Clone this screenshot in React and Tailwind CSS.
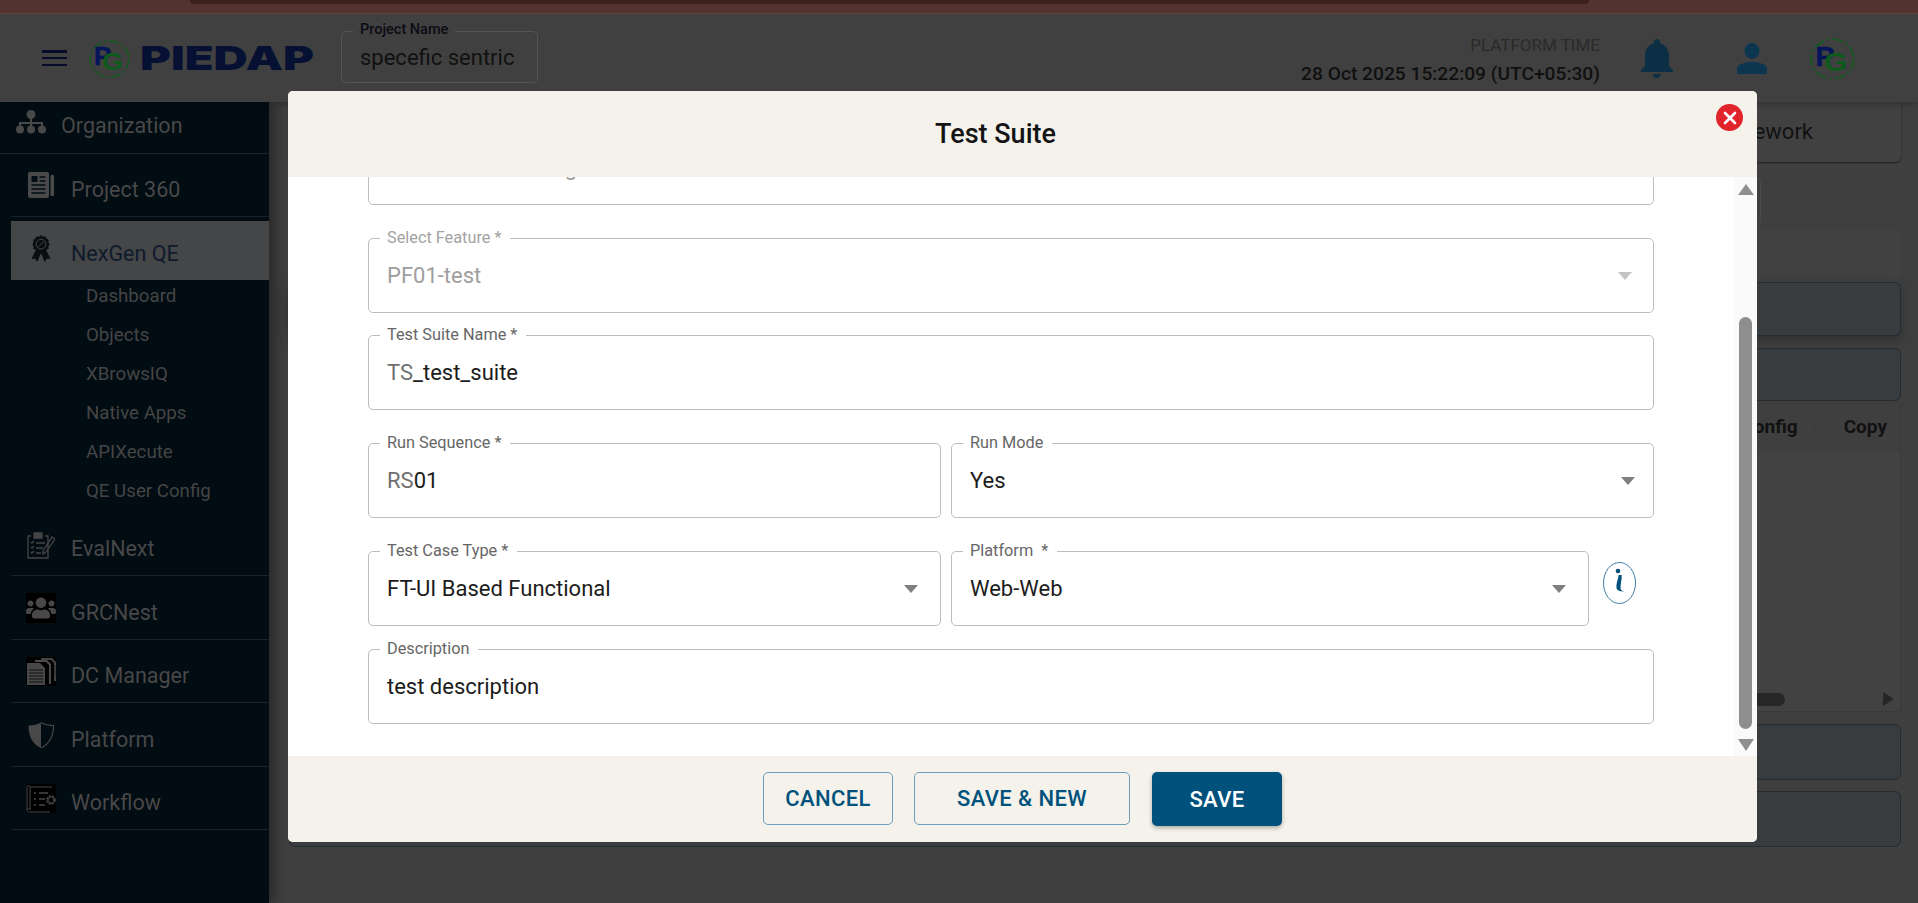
import React from "react";
import { FaUsers } from "react-icons/fa";
import { MdNotifications } from "react-icons/md";

const Logo = ({ className }) => (
  <svg viewBox="0 0 41 38" className={className}>
    <ellipse cx="20.500" cy="19" rx="19.500" ry="18" fill="none" stroke="#14591f" strokeWidth="1.600" strokeDasharray="10 2.500 2.500 2.500" />
    <text x="5" y="25" fontFamily="Liberation Sans" fontWeight="700" fontSize="26" stroke="#06145a" strokeWidth=".5" fill="#06145a">P</text>
    <text x="13" y="30" fontFamily="Liberation Sans" fontWeight="700" fontSize="24" textLength="21" lengthAdjust="spacingAndGlyphs" fill="#0e5a1c">G</text>
  </svg>
);

const OrgIcon = () => (
  <svg viewBox="0 0 30 24" className="w-[30px] h-[24px]" fill="#484848">
    <circle cx="15" cy="4.500" r="4.500" />
    <circle cx="4" cy="19.500" r="4" />
    <circle cx="15" cy="19.500" r="4" />
    <circle cx="26" cy="19.500" r="4" />
    <path d="M14 8h2v4h11v5h-2v-3H16v3h-2v-3H5v3H3v-5h11z" />
  </svg>
);

const PaperIcon = () => (
  <svg viewBox="0 0 26 26" className="w-[26px] h-[26px]">
    <rect x="0" y="0" width="21" height="26" rx="2" fill="#4a4a4a" />
    <rect x="22.500" y="3" width="3.500" height="21" rx="1" fill="#4a4a4a" />
    <rect x="3.500" y="4" width="6" height="6" fill="#010c13" />
    <path d="M11.500 5h6M11.500 9h6M3.500 13h14M3.500 17h14M3.500 21h14" stroke="#010c13" strokeWidth="1.500" />
  </svg>
);

const RibbonIcon = () => (
  <svg viewBox="0 0 20 28" className="w-[20px] h-[27px]">
    <path d="M5.500 14L0 25l4-.5L6 28l4-9 4 9 2-3.500 4 .5-5.500-11z" fill="#0b0d10" />
    <path d="M10 0l2 1.800 2.600-.5 1 2.400 2.400 1.100-.4 2.600 1.400 2.100-1.400 2.100.4 2.600-2.400 1.100-1 2.400-2.600-.5-2 1.800-2-1.800-2.600.5-1-2.400-2.400-1.100.4-2.600L1 9.500l1.400-2.100L2 4.800l2.400-1.100 1-2.400 2.600.5z" fill="#0b0d10" />
    <circle cx="10" cy="9.500" r="5" fill="none" stroke="#45464a" strokeWidth="1" />
    <path d="M7.500 12l5-5" stroke="#45464a" strokeWidth="1" />
  </svg>
);

const EvalIcon = () => (
  <svg viewBox="0 0 28 28" className="w-[28px] h-[28px]" fill="none" stroke="#454545" strokeWidth="1.300">
    <path d="M18 5h3v22H1V5h3" />
    <path d="M7 2h8v5H7z" fill="#454545" />
    <path d="M4 11l1 1 2-2M4 16l1 1 2-2M4 21l1 1 2-2M9 12h9M9 17h7M9 22h5" />
    <path d="M25 6l3 2-9 13-3 2 0-3z" />
  </svg>
);

const DocsIcon = () => (
  <svg viewBox="0 0 30 29" className="w-[30px] h-[29px] bg-black">
    <path d="M15 1h11l4 4v19h-2V6l-3-3H15z" fill="#454545" />
    <path d="M9 3h12l4 4v20h-2V8l-3-3H9z" fill="#4a4a4a" />
    <path d="M1 6h13l5 5v17H1z" fill="#484848" />
    <path d="M3 13h14M3 16h14M3 19h14M3 22h14M3 25h14" stroke="#111111" strokeWidth="1" />
    <path d="M26.500 9h3M26.500 12h3M26.500 15h3M26.500 18h3M21 12h2M21 15h2M21 18h2M21 21h2" stroke="#111111" strokeWidth=".8" />
  </svg>
);

const ShieldIcon = () => (
  <svg viewBox="0 0 26 26" className="w-[26px] h-[26px]">
    <path d="M13 .5C9.500 2.500 5 3.500 .5 3.500c0 10 3 18 12.500 22.500V.5z" fill="#484848" />
    <path d="M13 .5c3.500 2 8 3 12.500 3 0 10-3 18-12.500 22.500" fill="none" stroke="#484848" strokeWidth="1.200" />
  </svg>
);

const WorkflowIcon = () => (
  <svg viewBox="0 0 30 29" className="w-[30px] h-[29px] bg-black">
    <path d="M1 3c0-2 3-2 3 0v23c0-2-3-2-3 0zM4 3h22M4 28h20M1 26c0 2 1 2 3 2" fill="none" stroke="#454545" strokeWidth="1" />
    <path d="M8 9h2M13 9h9M8 15h2M13 15h6M8 21h2M13 21h6" stroke="#484848" strokeWidth="1.600" />
    <circle cx="25" cy="16" r="3.500" fill="none" stroke="#484848" strokeWidth="2.500" strokeDasharray="2 .8" />
  </svg>
);

const SideItem = ({ icon, label, rowClass, textClass, iconClass }) => (
  <div className={"flex items-center shrink-0 " + rowClass}>
    <div className={"flex justify-start items-center shrink-0 " + iconClass}>{icon}</div>
    <span className={"text-[21.5px] leading-[24px] whitespace-nowrap " + (textClass || "text-[#484848]")}>{label}</span>
  </div>
);

const Sidebar = () => (
  <aside className="w-[269px] shrink-0 bg-[#010c13] flex flex-col shadow-[6px_0_12px_rgba(0,0,0,0.35)] z-10">
    <SideItem
      icon={<OrgIcon />}
      label="Organization"
      rowClass="h-[52px] border-b border-[#182228] pb-[4px] pl-[16px]"
      iconClass="w-[45px] -mt-[8px]"
    />
    <SideItem
      icon={<PaperIcon />}
      label="Project 360"
      rowClass="h-[63px] ml-[11px] border-b border-[#182228] pt-[9px] pl-[17px]"
      iconClass="w-[43px] -mt-[9px]"
    />
    <SideItem
      icon={<RibbonIcon />}
      label="NexGen QE"
      rowClass="h-[59px] mt-[4px] ml-[11px] bg-[#454648] pt-[7px] pl-[20px]"
      iconClass="w-[40px] -mt-[11px]"
      textClass="text-[#0f1a2a]"
    />
    <div className="pt-[6.5px] pl-[86px] flex flex-col gap-[20px] text-[18.7px] leading-[19px] text-[#454545]">
      <span>Dashboard</span>
      <span>Objects</span>
      <span>XBrowsIQ</span>
      <span>Native Apps</span>
      <span>APIXecute</span>
      <span>QE User Config</span>
    </div>
    <SideItem
      icon={<EvalIcon />}
      label="EvalNext"
      rowClass="h-[75.5px] ml-[11px] border-b border-[#182228] pt-[22px] pl-[16px]"
      iconClass="w-[44px] -mt-[8px]"
    />
    <SideItem
      icon={<span className="w-[30px] h-[30px] bg-black flex items-center justify-center"><FaUsers className="w-[30px] h-[28px] text-[#484848]" /></span>}
      label="GRCNest"
      rowClass="h-[64px] ml-[11px] border-b border-[#182228] pt-[11px] pl-[15px]"
      iconClass="w-[45px] -mt-[10px]"
    />
    <SideItem
      icon={<DocsIcon />}
      label="DC Manager"
      rowClass="h-[63px] ml-[11px] border-b border-[#182228] pt-[9px] pl-[15px]"
      iconClass="w-[45px] -mt-[8px]"
    />
    <SideItem
      icon={<ShieldIcon />}
      label="Platform"
      rowClass="h-[64px] ml-[11px] border-b border-[#182228] pt-[10px] pl-[17px]"
      iconClass="w-[43px] -mt-[9px]"
    />
    <SideItem
      icon={<WorkflowIcon />}
      label="Workflow"
      rowClass="h-[63px] ml-[11px] border-b border-[#182228] pt-[9px] pl-[15px]"
      iconClass="w-[45px] -mt-[8px]"
    />
  </aside>
);

const Header = () => (
  <header className="h-[88px] shrink-0 bg-[#404040] flex items-center relative z-20 shadow-[0_2px_6px_rgba(0,0,0,0.25)]">
    <div className="ml-[42px] w-[25px] h-[16px] flex flex-col justify-between">
      <span className="h-[2.500px] bg-[#080a2a]" />
      <span className="h-[2.500px] bg-[#080a2a]" />
      <span className="h-[2.500px] bg-[#080a2a]" />
    </div>
    <Logo className="ml-[22px] w-[41px] h-[38px] mt-[2px]" />
    <div className="ml-[10px] w-[172px] mt-[2px]">
      <span className="inline-block origin-left scale-x-[1.43] font-['Inter'] font-black text-[33px] leading-[33px] text-[#051033]">PIEDAP</span>
    </div>
    <div className="relative ml-[29px] -mt-[2px] w-[197px] h-[52px] border border-[#555555] rounded-[5px] flex items-center pl-[18px] text-[22px] text-[#111111] whitespace-nowrap">
      specefic sentric
      <span className="absolute -top-[10px] left-[11px] px-[7px] bg-[#404040] text-[14.5px] leading-[16px] font-medium text-[#0c0c14]">Project Name</span>
    </div>
    <div className="ml-auto flex flex-col items-end mt-[4px] whitespace-nowrap">
      <span className="text-[17px] leading-[20px] text-[#2a2a2a]">PLATFORM TIME</span>
      <span className="mt-[8px] text-[19.2px] leading-[22px] font-medium text-[#101010]">28 Oct 2025 15:22:09 (UTC+05:30)</span>
    </div>
    <MdNotifications className="ml-[33px] w-[48px] h-[48px] text-[#0c2f45]" />
    <svg viewBox="0 0 30 32" className="ml-[56px] mt-[2px] w-[30px] h-[32px]" fill="#0c3650">
      <ellipse cx="15" cy="8" rx="7.500" ry="8" />
      <path d="M0 31v-5c0-5 8-7 15-7s15 2 15 7v5z" />
    </svg>
    <Logo className="ml-[43px] mr-[63px] w-[45px] h-[42px] mt-[2px]" />
  </header>
);

const BlueCard = ({ className }) => (
  <div className={"rounded-[6px] bg-[#393c3f] border border-[#232b33] " + className} />
);

const Background = () => (
  <main className="flex-1 flex flex-col pl-[20px] pr-[17px] min-w-0 text-[#111111]">
    <div className="h-[60px] shrink-0 rounded-b-[6px] bg-[#414141] shadow-[0_1px_2px_rgba(0,0,0,0.5)] flex items-center justify-end pr-[88px] pb-[2px] text-[22px]">Test Framework</div>
    <div className="h-[49px] mt-[15px] mr-[140px] shrink-0 border border-[#4a4a4a] rounded-[6px]" />
    <div className="h-[53px] mt-[3px] shrink-0 rounded-[6px] bg-[#414141]" />
    <BlueCard className="h-[54px] shrink-0 shadow-[0_4px_12px_rgba(0,0,0,0.25)]" />
    <BlueCard className="h-[53px] mt-[12px] shrink-0" />
    <div className="h-[311px] shrink-0 bg-[#424242] border-x border-b border-[#3a3a3a] flex flex-col">
      <div className="h-[53px] shrink-0 bg-[#3f3f3f] border-b border-[#444444] flex items-center justify-end pt-[1px] font-bold text-[19px] whitespace-nowrap">
        <span>Config</span>
        <span className="w-px h-[18px] bg-[#3a3a3a] ml-[16px]" />
        <span className="ml-[29px] mr-[13px]">Copy</span>
      </div>
      <div className="mt-auto mb-[5px] flex items-center justify-end h-[14px]">
        <span className="h-[13px] w-[400px] mr-[98px] bg-[#262626] rounded-full" />
        <span className="w-0 h-0 border-y-[7px] border-y-transparent border-l-[11px] border-l-[#262626] mr-[6px]" />
      </div>
    </div>
    <BlueCard className="h-[56px] mt-[12px] shrink-0" />
    <BlueCard className="h-[56px] mt-[11px] shrink-0" />
  </main>
);

const Arrow = ({ className }) => (
  <span className={"absolute top-1/2 -translate-y-1/2 w-0 h-0 border-x-[7px] border-x-transparent border-t-[8px] " + className} />
);

const Field = ({ label, disabled, select, children, className = "", arrowClass = "right-[22px]" }) => (
  <div className={"relative h-[75px] border border-[#bdbdbd] rounded-[5px] flex items-center pl-[18px] pt-[1px] text-[22px] leading-[24px] whitespace-nowrap " + (disabled ? "text-[#9e9e9e] " : "text-[#1c1c1c] ") + className}>
    {children}
    {label && (
      <span className={"absolute -top-[10px] left-[11px] pl-[7px] pr-[9px] bg-white text-[16.3px] leading-[18px] " + (disabled ? "text-[#a3a3a3]" : "text-[#666666]")}>{label}</span>
    )}
    {select && <Arrow className={arrowClass + (disabled ? " border-t-[#c4c4c4]" : " border-t-[#7f7f7f]")} />}
  </div>
);

const Modal = () => (
  <div className="absolute left-[288px] top-[91px] w-[1469px] h-[751px] z-30 flex flex-col rounded-[5px] overflow-hidden bg-white font-['Roboto',sans-serif]">
    <div className="h-[86px] shrink-0 bg-[#f5f2eb] flex items-center justify-center pr-[54px] relative z-10">
      <h2 className="text-[27px] leading-[32px] font-medium text-[#141414]">Test Suite</h2>
      <div className="absolute right-[14px] top-[13px] w-[27px] h-[27px] rounded-full bg-[#e1232b] flex items-center justify-center">
        <svg viewBox="0 0 14 14" className="w-[14px] h-[14px]" stroke="#ffffff" strokeWidth="2.600" strokeLinecap="round">
          <path d="M2 2l10 10M12 2L2 12" />
        </svg>
      </div>
    </div>
    <div className="flex-1 flex min-h-0 overflow-hidden">
      <div className="flex-1 pl-[80px] pr-[80px] -mt-[47px] flex flex-col">
        <Field className="shrink-0" disabled>
          <span>Test Module Config</span>
        </Field>
        <Field className="mt-[33px] shrink-0" label="Select Feature *" disabled select arrowClass="right-[21px]">PF01-test</Field>
        <Field className="mt-[22px] shrink-0" label="Test Suite Name *">
          <span className="text-[#707070]">TS</span>_test_suite
        </Field>
        <div className="mt-[33px] flex gap-[10px] shrink-0">
          <Field className="w-[573px]" label="Run Sequence *">
            <span className="text-[#707070]">RS</span>01
          </Field>
          <Field className="flex-1" label="Run Mode" select arrowClass="right-[18px]">Yes</Field>
        </div>
        <div className="mt-[33px] flex gap-[10px] shrink-0">
          <Field className="w-[573px]" label="Test Case Type *" select>FT-UI Based Functional</Field>
          <Field className="w-[638px]" label={"Platform\u00a0 *"} select>Web-Web</Field>
          <svg viewBox="0 0 33 42" className="ml-[4px] mt-[11px] w-[33px] h-[42px]" fill="none">
            <ellipse cx="16.500" cy="21" rx="16" ry="20.500" stroke="#3f7fa6" strokeWidth="1" />
            <circle cx="15" cy="9" r="2.300" fill="#00527c" />
            <path d="M15.500 13c.5 1.500-2.500 8-2 13 .3 3 5 3.500 9.500 4-3.500-.5-5.500-1.500-5.500-4 0-4 1.500-9 1.200-13z" fill="#00527c" />
          </svg>
        </div>
        <Field className="mt-[23px] shrink-0" label="Description">test description</Field>
      </div>
      <div className="w-[23px] shrink-0 bg-[#fafafa] flex flex-col items-center pt-[7px]">
        <span className="w-0 h-0 border-x-[8px] border-x-transparent border-b-[11px] border-b-[#8f8f8f]" />
        <span className="mt-[122px] w-[13px] h-[412px] rounded-full bg-[#8e8e8e]" />
        <span className="mt-[10px] w-0 h-0 border-x-[8px] border-x-transparent border-t-[12px] border-t-[#8f8f8f]" />
      </div>
    </div>
    <div className="h-[86px] shrink-0 bg-[#f5f2eb] flex items-start justify-center pt-[16px] gap-[21px] text-[22px] font-medium tracking-[0.4px]">
      <button className="w-[130px] h-[53px] rounded-[5px] border border-[#6d9db8] text-[#00527c]">CANCEL</button>
      <button className="w-[216px] h-[53px] rounded-[5px] border border-[#6d9db8] text-[#00527c] bg-[#f5f2eb]">SAVE &amp; NEW</button>
      <button className="w-[130px] h-[54px] ml-[1px] rounded-[5px] bg-[#00517c] text-white shadow-[0_2px_4px_rgba(0,0,0,0.3)]">SAVE</button>
    </div>
  </div>
);

export default function App() {
  return (
    <div className="relative w-[1918px] h-[903px] overflow-hidden bg-[#3f3f3f] flex flex-col font-['Roboto',sans-serif]">
      <div className="h-[14px] shrink-0 bg-[#52332f] border-b border-[#6a4540] pl-[190px] pr-[329px]">
        <div className="h-[4px] bg-[#3c201c] rounded-b-[6px]" />
      </div>
      <Header />
      <div className="flex-1 flex min-h-0">
        <Sidebar />
        <Background />
      </div>
      <Modal />
    </div>
  );
}
